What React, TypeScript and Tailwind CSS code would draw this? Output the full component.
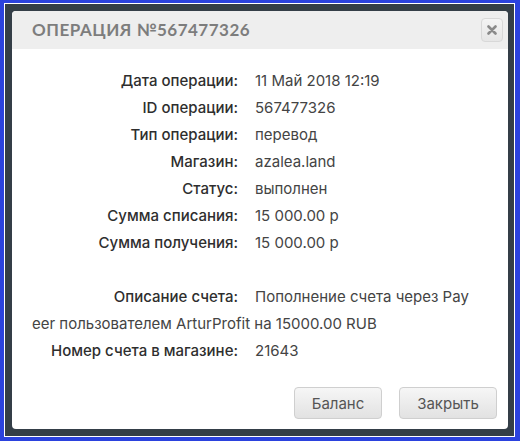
import React from "react";

const rows: [string, string][] = [
  ["Дата операции:", "11 Май 2018 12:19"],
  ["ID операции:", "567477326"],
  ["Тип операции:", "перевод"],
  ["Магазин:", "azalea.land"],
  ["Статус:", "выполнен"],
  ["Сумма списания:", "15 000.00 р"],
  ["Сумма получения:", "15 000.00 р"],
];

function Row({ label, value }: { label: string; value: string }) {
  return (
    <div className="break-all">
      <span className="inline-block w-[206px] text-right text-[#2e2e2e] font-medium mr-[17px]">{label}</span>
      <span className="text-[#444]">{value}</span>
    </div>
  );
}

export default function App() {
  return (
    <div className="w-[520px] h-[441px] bg-[#2b42de] pt-[3px] pl-[4px] pr-[5px] pb-[4px]">
      <div className="w-full h-full border border-white bg-[#343e47] pt-[7px] pb-[7px] pl-[7px] pr-[6px]">
        <div className="w-full h-full bg-white rounded-[4px] overflow-hidden flex flex-col">
          <div className="h-[38px] bg-[#eeeeee] flex items-center justify-between pl-[20px] pr-[5px]">
            <div className="text-[#7d7d7d] text-[17px] font-bold tracking-[0.5px] uppercase" style={{ fontFamily: "'Lato', sans-serif" }}>
              Операция №567477326
            </div>
            <div className="w-[22px] h-[24px] rounded-[4px] border border-[#d8d8d8] bg-gradient-to-b from-[#f4f4f4] to-[#e6e6e6] flex items-center justify-center">
              <svg width="10" height="10" viewBox="0 0 10 10">
                <path d="M1.5 1.5 L8.5 8.5 M8.5 1.5 L1.5 8.5" stroke="#8a8a8a" strokeWidth="2.6" strokeLinecap="round" />
              </svg>
            </div>
          </div>
          <div className="flex-1 flex flex-col pl-[20px] pr-[35px] pt-[18px] text-[15px] leading-[27px]" style={{ fontFamily: "'Inter', sans-serif" }}>
            {rows.map(([l, v]) => (
              <Row key={l} label={l} value={v} />
            ))}
            <div className="h-[27px]" />
            <Row label="Описание счета:" value="Пополнение счета через Payeer пользователем ArturProfit на 15000.00 RUB" />
            <Row label="Номер счета в магазине:" value="21643" />
            <div className="flex justify-end gap-[17px] mt-auto mb-[10px] -mr-[24px]">
              <button className="w-[88px] h-[32px] rounded-[4px] border border-[#cfcfcf] bg-gradient-to-b from-[#f6f6f6] to-[#e2e2e2] text-[#555] text-[15px]">Баланс</button>
              <button className="w-[98px] h-[32px] rounded-[4px] border border-[#cfcfcf] bg-gradient-to-b from-[#f6f6f6] to-[#e2e2e2] text-[#555] text-[15px]">Закрыть</button>
            </div>
          </div>
        </div>
      </div>
    </div>
  );
}
